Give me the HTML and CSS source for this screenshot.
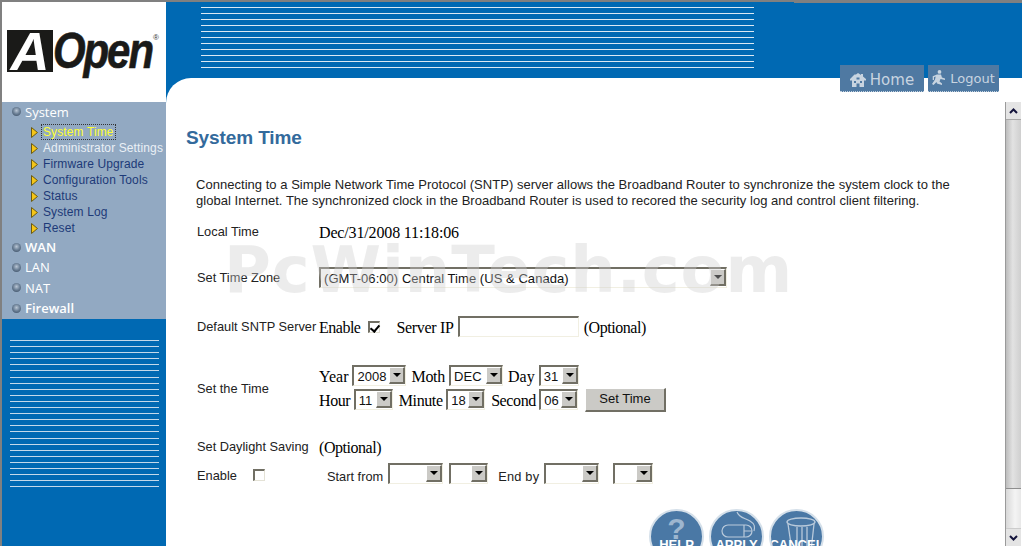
FILE: index.html
```html
<!DOCTYPE html>
<html lang="en">
<head>
<meta charset="utf-8">
<title>System Time</title>
<link rel="stylesheet" href="styles.css">
</head>
<body>
<div class="page">
  <aside class="side">
    <div class="logo">
      <span class="logo-a">A</span><span class="logo-open">Open</span><span class="logo-r">®</span>
    </div>
    <nav class="nav">
      <div class="group"><i class="bulb"></i>System</div>
      <ul class="subs">
        <li class="sub"><svg class="tri" viewBox="0 0 7 11"><path d="M.5.5 6.5 5.5.5 10.5Z" fill="#f5c518" stroke="#6b5a10"/></svg><a class="link current">System Time</a></li>
        <li class="sub"><svg class="tri" viewBox="0 0 7 11"><path d="M.5.5 6.5 5.5.5 10.5Z" fill="#f5c518" stroke="#6b5a10"/></svg><a class="link hover">Administrator Settings</a></li>
        <li class="sub"><svg class="tri" viewBox="0 0 7 11"><path d="M.5.5 6.5 5.5.5 10.5Z" fill="#f5c518" stroke="#6b5a10"/></svg><a class="link">Firmware Upgrade</a></li>
        <li class="sub"><svg class="tri" viewBox="0 0 7 11"><path d="M.5.5 6.5 5.5.5 10.5Z" fill="#f5c518" stroke="#6b5a10"/></svg><a class="link">Configuration Tools</a></li>
        <li class="sub"><svg class="tri" viewBox="0 0 7 11"><path d="M.5.5 6.5 5.5.5 10.5Z" fill="#f5c518" stroke="#6b5a10"/></svg><a class="link">Status</a></li>
        <li class="sub"><svg class="tri" viewBox="0 0 7 11"><path d="M.5.5 6.5 5.5.5 10.5Z" fill="#f5c518" stroke="#6b5a10"/></svg><a class="link">System Log</a></li>
        <li class="sub"><svg class="tri" viewBox="0 0 7 11"><path d="M.5.5 6.5 5.5.5 10.5Z" fill="#f5c518" stroke="#6b5a10"/></svg><a class="link">Reset</a></li>
      </ul>
      <div class="group strong"><i class="bulb"></i>WAN</div>
      <div class="group"><i class="bulb"></i>LAN</div>
      <div class="group"><i class="bulb"></i>NAT</div>
      <div class="group strong"><i class="bulb"></i>Firewall</div>
    </nav>
    <div class="side-foot"><div class="side-stripes"></div></div>
  </aside>
  <main class="main">
    <header class="top">
      <div class="top-stripes"></div>
      <div class="tabs">
        <a class="tab tab-home">
          <svg class="tab-icon" viewBox="0 0 16 14"><path d="M8 0 6 1.500H4.500L0 6v1.500h2V14h4.500v-3.500h3V14H14V7.500h2V6l-3-2.500V1h-2v1Z" fill="#c8d4e0"/><path d="M4 8h2v2H4zM10 8h2v2h-2zM6.500 4.500h3v2h-3z" fill="#4f79a2"/></svg>
          <span>Home</span>
        </a>
        <a class="tab tab-logout">
          <svg class="tab-icon small" viewBox="0 0 13 16"><circle cx="7.500" cy="1.900" r="1.900" fill="#c8d4e0"/><path d="M5 4.500h4l1 3 3 1v1.500l-4.500-1-1 2.500 2.500 2v1.500l-5-1.500-.5-1.500L1.500 15 0 14l3-4.500.7-3-1.700.8V10H.7V6.300Z" fill="#c8d4e0"/></svg>
          <span>Logout</span>
        </a>
      </div>
    </header>
    <div class="sheet">
      <div class="body">
        <h1 class="title">System Time</h1>
        <p class="intro">Connecting to a Simple Network Time Protocol (SNTP) server allows the Broadband Router to synchronize the system clock to the global Internet. The synchronized clock in the Broadband Router is used to recored the security log and control client filtering.</p>

        <div class="row row-local">
          <span class="label">Local Time</span>
          <span class="serif">Dec/31/2008 11:18:06</span>
        </div>

        <div class="row row-zone">
          <span class="label">Set Time Zone</span>
          <span class="sel w-zone"><select><option>(GMT-06:00) Central Time (US &amp; Canada)</option></select><i class="arrow"></i></span>
        </div>

        <div class="row row-sntp">
          <span class="label">Default SNTP Server</span>
          <span class="serif tight">Enable</span>
          <input class="check check-sntp" type="checkbox" checked>
          <span class="serif server-ip">Server IP</span>
          <input class="text-in" type="text">
          <span class="serif optional">(Optional)</span>
        </div>

        <div class="row row-time">
          <span class="label">Set the Time</span>
          <div class="time-lines">
            <div class="line line-date">
              <span class="serif">Year</span>
              <span class="sel w-54"><select><option>2008</option></select><i class="arrow"></i></span>
              <span class="serif moth">Moth</span>
              <span class="sel w-54"><select><option>DEC</option></select><i class="arrow"></i></span>
              <span class="serif">Day</span>
              <span class="sel w-40"><select><option>31</option></select><i class="arrow"></i></span>
            </div>
            <div class="line line-clock">
              <span class="serif">Hour</span>
              <span class="sel w-39"><select><option>11</option></select><i class="arrow"></i></span>
              <span class="serif">Minute</span>
              <span class="sel w-39"><select><option>18</option></select><i class="arrow"></i></span>
              <span class="serif">Second</span>
              <span class="sel w-39"><select><option>06</option></select><i class="arrow"></i></span>
              <button class="btn" type="button">Set Time</button>
            </div>
          </div>
        </div>

        <div class="row row-day">
          <span class="label">Set Daylight Saving</span>
          <span class="serif optional-day">(Optional)</span>
        </div>

        <div class="row row-enable">
          <span class="label label-enable">Enable</span>
          <input class="check" type="checkbox">
          <span class="plain start-from">Start from</span>
          <span class="sel w-55"><select><option></option></select><i class="arrow"></i></span>
          <span class="sel w-39 gap-6"><select><option></option></select><i class="arrow"></i></span>
          <span class="plain end-by">End by</span>
          <span class="sel w-55"><select><option></option></select><i class="arrow"></i></span>
          <span class="sel w-40 gap-14"><select><option></option></select><i class="arrow"></i></span>
        </div>

        <div class="actions">
          <a class="round"><span class="q">?</span><span class="round-text">HELP</span></a>
          <a class="round">
            <svg class="round-icon" viewBox="0 0 55 40"><path d="M28 1c2 6 8 6 13 9s5 6 4 10" fill="none" stroke="#b9cadb" stroke-width="1.200"/><rect x="13" y="14" width="30" height="12" rx="6" fill="none" stroke="#b9cadb" stroke-width="1.200"/><path d="M35 14v12M35 20h8" stroke="#b9cadb" stroke-width="1.200"/></svg>
            <span class="round-text">APPLY</span>
          </a>
          <a class="round">
            <svg class="round-icon" viewBox="0 0 55 40"><ellipse cx="32" cy="11" rx="14" ry="4" fill="none" stroke="#b9cadb" stroke-width="1.400"/><path d="M19 13l4 27M45 13l-3 27M28 16v24M33 16v24M38 16v24" stroke="#b9cadb" stroke-width="1.300"/></svg>
            <span class="round-text">CANCEL</span>
          </a>
        </div>
      </div>
      <div class="scrollbar">
        <div class="sb-btn"><svg viewBox="0 0 9 6" class="chev"><path d="M1 5 4.500 1.500 8 5" fill="none" stroke="#14143c" stroke-width="2"/></svg></div>
        <div class="sb-thumb"></div>
        <div class="sb-track"></div>
        <div class="sb-btn"><svg viewBox="0 0 9 6" class="chev"><path d="M1 1 4.500 4.500 8 1" fill="none" stroke="#14143c" stroke-width="2"/></svg></div>
      </div>
      <div class="watermark">PcWinTech.com</div>
    </div>
  </main>
</div>
</body>
</html>
```
FILE: styles.css
```css
* { box-sizing: border-box; }
html, body { margin: 0; height: 100%; overflow: hidden; background: #fff; }
body { font-family: "Liberation Sans", Arial, sans-serif; font-size: 13px; color: #222; }
.page { display: flex; width: 1022px; height: 546px; overflow: hidden; border-top: 2px solid #808080; border-left: 2px solid #808080; }

/* sidebar */
.side { width: 164px; flex: none; display: flex; flex-direction: column; }
.logo { height: 100px; background: #fff; position: relative; flex: none; }
.logo-a { position: absolute; left: 5px; top: 28px; width: 46px; height: 42px; background: #1a1a18; color: #fff; font: italic 700 54px/43px "Liberation Sans", sans-serif; text-align: center; }
.logo-open { position: absolute; left: 51px; top: 21px; color: #1a1a18; font: italic 700 50px/56px "Liberation Sans", sans-serif; letter-spacing: -2.500px; -webkit-text-stroke: .6px #1a1a18; transform: scaleX(.84); transform-origin: left center; }
.logo-r { position: absolute; left: 151px; top: 31px; font-size: 8px; line-height: 10px; color: #333; }
.nav { height: 217px; flex: none; background: #92a9c2; }
.group { height: 20.400px; display: flex; align-items: center; padding: 0 0 1px 10px; font: 13px/20px "Open Sans", sans-serif; color: #fff; }
.group.strong { font-weight: 600; }
.bulb { width: 9px; height: 9px; border-radius: 50%; margin-right: 4px; background: radial-gradient(circle at 50% 40%, #b9c6d4 0, #6f8399 45%, #2f4258 100%); }
.subs { list-style: none; margin: 2px 0 1px; padding: 0 0 0 29px; }
.sub { height: 16px; display: flex; align-items: center; white-space: nowrap; }
.tri { width: 7px; height: 11px; margin-right: 5px; flex: none; }
.link { font-size: 12px; line-height: 14px; color: #1d3a78; letter-spacing: .12px; padding: 0 1px; border: 1px solid transparent; margin-left: -2px; }
.link.current { color: #ffff33; border: 1px dotted #333; }
.link.hover { color: #eaf0f6; }
.side-foot { flex: 1; background: #0069b3; padding: 21px 7px 0 8px; }
.side-stripes { height: 147px; background: repeating-linear-gradient(to bottom, #c4d9ea 0, #c4d9ea 1px, transparent 1px, transparent 6.100px); }

/* header */
.main { flex: 1; min-width: 0; display: flex; flex-direction: column; background: #0069b3; }
.top { height: 76px; flex: none; position: relative; padding: 5px 0 0 35px; }
.top::before { content: ""; position: absolute; right: 0; top: 0; width: 228px; height: 1px; background: #808080; }
.top-stripes { width: 553px; height: 65px; background: repeating-linear-gradient(to bottom, #dbe9f4 0, #dbe9f4 1px, transparent 1px, transparent 6px); }
.tabs { position: absolute; left: 674px; top: 63px; display: flex; gap: 4px; z-index: 2; }
.tab { height: 27px; background: #4f79a2; border-bottom: 1px dotted #c5d3e0; display: flex; align-items: center; justify-content: center; color: #c8d4e0; font-family: "DejaVu Sans", sans-serif; }
.tab-home { width: 84px; padding-top: 3px; font-size: 15px; gap: 4px; }
.tab-logout { width: 71px; padding-top: 0; font-size: 13px; gap: 5px; }
.tab-icon { width: 16px; height: 14px; }
.tab-icon.small { width: 13px; height: 16px; }

/* content sheet */
.sheet { flex: 1; min-height: 0; display: flex; position: relative; background: #fff; border-top-left-radius: 25px; overflow: hidden; }
.body { flex: 1; min-width: 0; padding: 49px 0 0 20px; }
.title { margin: 0; font: 700 19px/22px "Liberation Sans", sans-serif; color: #336a9c; letter-spacing: -.1px; }
.intro { margin: 28px 0 0 10px; width: 770px; font-size: 13px; line-height: 16px; letter-spacing: .03px; }
.row { display: flex; align-items: center; margin-left: 11px; }
.label { width: 122px; flex: none; font-size: 12.800px; white-space: nowrap; }
.serif { padding-top: 3px; font: 16px/20px "Liberation Serif", serif; color: #000; white-space: nowrap; letter-spacing: -.15px; }
.tight { letter-spacing: -.5px; }
.plain { padding-top: 6px; font-size: 12.800px; white-space: nowrap; }
.row-local { margin-top: 12px; height: 20px; }
.row-zone { margin-top: 26px; height: 21px; }
.row-sntp { margin-top: 28px; height: 21px; }
.row-time { margin-top: 28px; height: 45px; }
.row-time .label { padding-top: 2px; }
.row-day { margin-top: 26px; height: 20px; }
.row-enable { margin-top: 7px; height: 21px; }
.time-lines { display: flex; flex-direction: column; gap: 3px; }
.line { display: flex; align-items: center; height: 21px; }
.line-date .serif { letter-spacing: 0; }
.line-date .moth { letter-spacing: -.3px; }
.line-date .sel { margin: 0 5px 0 4px; }
.line-clock .serif { letter-spacing: -.4px; }
.line-clock .sel { margin: 0 6px 0 3.500px; }

/* fields */
.sel { position: relative; display: block; height: 21px; flex: none; }
.sel select { appearance: none; display: block; width: 100%; height: 100%; margin: 0; padding: 0 18px 0 3px; background: #fff; color: #111; font: 13px "Liberation Sans", sans-serif; letter-spacing: .05px; border-style: solid; border-width: 2px 1px 1px 2px; border-color: #716f64 #f1efe2 #f1efe2 #716f64; border-radius: 0; }
.arrow { position: absolute; right: 1px; top: 2px; width: 16px; height: 17px; background: #cbcac6; border-style: solid; border-width: 1px 2px 2px 1px; border-color: #fff #716f64 #716f64 #fff; }
.arrow::after { content: ""; position: absolute; left: 3px; top: 5px; border-style: solid; border-width: 4px 4px 0; border-color: #000 transparent transparent; }
.w-zone { width: 408px; }
.w-54 { width: 54px; }
.w-55 { width: 55px; }
.w-40 { width: 40px; }
.w-39 { width: 39px; }
.gap-6 { margin-left: 6px; }
.gap-14 { margin-left: 14px; }
.check { appearance: none; position: relative; width: 12px; height: 12px; margin: 0 0 0 8px; background: #fff; border-style: solid; border-width: 2px 1px 1px 2px; border-color: #716f64 #e4e2d6 #e4e2d6 #716f64; flex: none; }
.check:checked::after { content: ""; position: absolute; left: 2px; top: 0; width: 4px; height: 7px; border: solid #000; border-width: 0 2px 2px 0; transform: rotate(40deg); }
.server-ip { margin-left: 16px; letter-spacing: -.3px; }
.text-in { width: 121px; height: 21px; margin: 0 0 0 4px; padding: 0; background: #fff; border-style: solid; border-width: 2px 1px 1px 2px; border-color: #716f64 #f1efe2 #f1efe2 #716f64; }
.optional { margin-left: 5px; letter-spacing: -.45px; }
.optional-day { letter-spacing: -.45px; }
.btn { width: 81px; height: 24px; margin-left: .700px; padding: 0 0 2px; background: #cbcac6; color: #111; font: 13px "Liberation Sans", sans-serif; border-style: solid; border-width: 1px 2px 2px 1px; border-color: #fff #716f64 #716f64 #fff; }
.label-enable { width: 56px; padding-top: 4px; }
.row-enable .check { margin: 2px 0 0; }
.start-from { margin: 0 5px 0 62px; }
.end-by { margin: 0 5px 0 10px; letter-spacing: .2px; }

/* round buttons */
.actions { display: flex; gap: 5px; margin: 25px 0 0 463px; }
.round { width: 55px; height: 55px; flex: none; position: relative; overflow: hidden; border-radius: 50%; background: #4a78a5; border: 2px solid #d5e0ea; color: #fff; }
.q { position: absolute; left: 0; right: 0; top: -1px; text-align: center; font: 700 30px/38px "Liberation Sans", sans-serif; color: #9db6cf; }
.round-icon { position: absolute; left: -2px; top: 0; width: 55px; height: 40px; }
.round-text { position: absolute; left: -4px; right: -4px; top: 26px; text-align: center; font: 700 13px/16px "Liberation Sans", sans-serif; }

/* scrollbar */
.scrollbar { width: 16px; flex: none; margin: 24px 1px 0 0; display: flex; flex-direction: column; border-left: 1px solid #9a9a9a; }
.sb-btn { height: 17px; flex: none; display: flex; align-items: center; justify-content: center; background: #e4e4e4; }
.chev { width: 9px; height: 6px; }
.sb-thumb { flex: 1; background: linear-gradient(to right, #bdbdbd, #e2e2e2 45%, #cfcfcf); border-top: 1px solid #a8a8a8; border-bottom: 1px solid #8e8e8e; }
.sb-track { height: 40px; flex: none; background: linear-gradient(to right, #d8d8d8, #f4f4f4 60%, #e8e8e8); border-bottom: 1px solid #ccc; }

/* watermark lies over the form */
.watermark { position: absolute; left: 58px; top: 155.500px; font: 700 64px/72px "DejaVu Sans", sans-serif; letter-spacing: .85px; color: rgba(205, 205, 205, .38); pointer-events: none; white-space: nowrap; z-index: 3; }
```
